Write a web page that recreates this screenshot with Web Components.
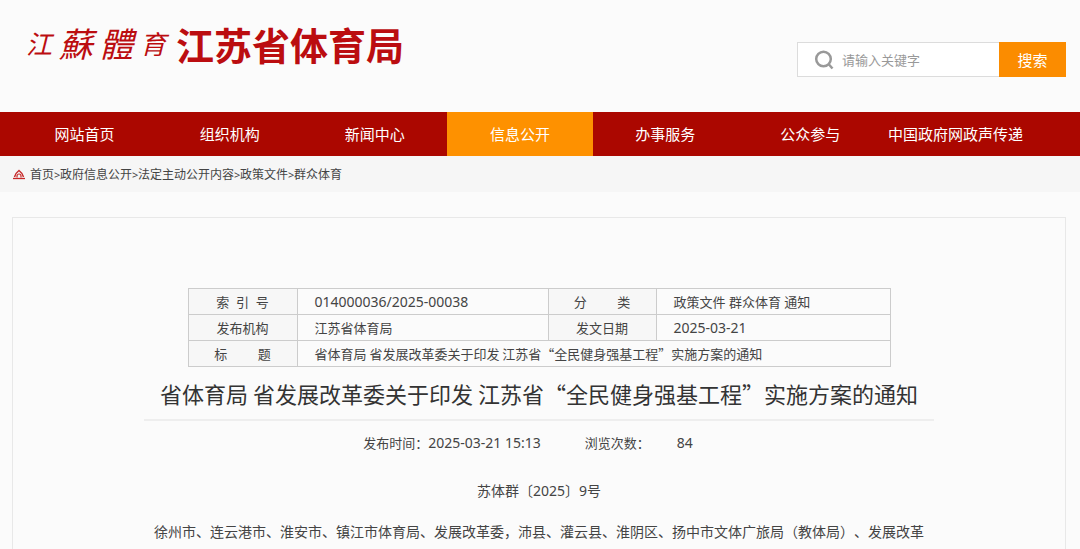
<!DOCTYPE html>
<html lang="zh-CN">
<head>
<meta charset="utf-8">
<meta name="viewport" content="width=device-width, initial-scale=1">
<title>江苏省体育局</title>
<style>
body{margin:0;background:#fbfbfb;color:#444;font-family:"Noto Sans","Noto Sans CJK SC",sans-serif;font-size:13px}
</style>
</head>
<body>
<sports-page></sports-page>
<script>
function define(name, html){
  const t=document.createElement('template');
  t.innerHTML='<style>*{box-sizing:border-box}a{color:inherit;text-decoration:none}</style>'+html;
  customElements.define(name, class extends HTMLElement{
    constructor(){super();this.attachShadow({mode:'open'}).append(t.content.cloneNode(true));}
  });
}

define('site-logo', `
<style>
:host{display:block;color:#bb0d10}
a{display:flex;align-items:center}
.script{display:flex;align-items:center;justify-content:space-between;width:140px;margin-right:10px;font-style:italic;font-size:34px;line-height:40px}
.small{font-size:26px}
h1{margin:0;font-size:38px;line-height:44px;font-weight:700;font-family:"Noto Sans CJK SC",sans-serif;white-space:nowrap}
</style>
<a href="#"><span class="script"><span class="small">江</span><span>蘇</span><span>體</span><span class="small">育</span></span><h1>江苏省体育局</h1></a>`);

define('search-box', `
<style>
:host{display:block}
form{display:flex;height:35px}
label{display:flex;align-items:center;gap:8px;width:202px;padding-left:16px;background:#fff;border:1px solid #dcdcdc;border-right:0}
svg{flex:none}
input{flex:1;min-width:0;border:0;outline:0;padding:0;background:none;font:inherit;font-size:13px;color:#444}
input::placeholder{color:#999;opacity:1}
button{width:67px;border:0;padding:0;background:#fb8c00;color:#fff;font:inherit;font-size:15px}
</style>
<form><label><svg width="20" height="20" viewBox="0 0 20 20" fill="none" stroke="#999" stroke-width="2.5" aria-hidden="true"><circle cx="9.5" cy="9" r="7.300"/><path d="M14.500 14l4 4.500"/></svg><input type="text" placeholder="请输入关键字" aria-label="请输入关键字"></label><button type="button">搜索</button></form>`);

define('site-header', `
<style>
:host{display:flex;justify-content:space-between;padding:22px 14px 0 26px;height:112px}
search-box{margin-top:20px}
</style>
<site-logo></site-logo><search-box></search-box>`);

define('nav-item', `
<style>
:host{display:block;flex:1 1 0;min-width:0}
:host([active]){background:#fe9100}
a{display:block;text-align:center;color:#fff;font-size:15px;line-height:44px;white-space:nowrap}
</style>
<a href="#"><slot></slot></a>`);

define('site-nav', `
<style>
:host{display:block;background:#ab0700}
nav{display:flex;padding:0 52px 0 12px}
</style>
<nav><nav-item>网站首页</nav-item><nav-item>组织机构</nav-item><nav-item>新闻中心</nav-item><nav-item active>信息公开</nav-item><nav-item>办事服务</nav-item><nav-item>公众参与</nav-item><nav-item>中国政府网政声传递</nav-item></nav>`);

define('bread-crumb', `
<style>
:host{display:block;background:#f6f6f6}
nav{display:flex;align-items:center;height:36px;padding:0 12px;font-size:12px;white-space:nowrap}
nav span{width:6px;text-align:center;font-size:11px}
svg{margin-right:4px}
</style>
<nav><svg width="14" height="12" viewBox="0 0 14 12" fill="none" stroke="#c62828" aria-hidden="true"><path d="M1 10.5h12" stroke-width="1.3"/><path d="M2.500 9Q3.500 5 7 2.500Q10.500 5 11.500 9" stroke-width="1.500"/><path d="M5 9.500V8a2 2 0 0 1 4 0v1.500" stroke-width="1.200"/></svg><a href="#">首页</a><span>&gt;</span><a href="#">政府信息公开</a><span>&gt;</span><a href="#">法定主动公开内容</a><span>&gt;</span><a href="#">政策文件</a><span>&gt;</span><a href="#">群众体育</a></nav>`);

define('doc-info', `
<style>
:host{display:block;max-width:703px;margin:0 auto}
table{width:100%;border-collapse:collapse;table-layout:fixed;line-height:20px}
th,td{height:26px;padding:3px 0 2px;border:1px solid #ccc;font-weight:400}
th{background:#f7f7f7;text-align:center;white-space:pre}
td{padding-left:17px;text-align:left}
.num{font-size:14px}
</style>
<table>
<colgroup><col style="width:109px"><col style="width:251px"><col style="width:108px"><col></colgroup>
<tr><th scope="row">索  引  号</th><td class="num">014000036/2025-00038</td><th scope="row">分         类</th><td>政策文件 群众体育 通知</td></tr>
<tr><th scope="row">发布机构</th><td>江苏省体育局</td><th scope="row">发文日期</th><td class="num">2025-03-21</td></tr>
<tr><th scope="row">标         题</th><td colspan="3"><slot></slot></td></tr>
</table>`);

define('doc-article', `
<style>
:host{display:block;max-width:790px;margin:0 auto;text-align:center}
h2{margin:0;padding:8px 0;border-bottom:2px solid #eee;font-size:22px;line-height:36px;font-weight:400;color:#333;white-space:nowrap;font-family:"Noto Sans CJK SC",sans-serif}
.meta{display:flex;justify-content:center;gap:44px;line-height:20px;margin-top:12px;padding-right:22px}
.meta span{display:flex}
.num{font-size:14px}
.meta .views{gap:27px}
p{margin:0;font-size:14px;line-height:40px}
.no{margin-top:18px}
.to{white-space:nowrap;font-family:"Noto Sans CJK SC",sans-serif;text-spacing-trim:space-all}
</style>
<h2><slot></slot></h2>
<div class="meta"><span>发布时间：<span class="num">2025-03-21 15:13</span></span><span class="views"><span>浏览次数：</span><span class="num">84</span></span></div>
<p class="no">苏体群〔2025〕9号</p>
<p class="to">徐州市、连云港市、淮安市、镇江市体育局、发展改革委，沛县、灌云县、淮阴区、扬中市文体广旅局（教体局）、发展改革</p>`);

define('sports-page', `
<style>
:host{display:block}
main{margin:25px 14px 0 12px;padding:70px 0 0;border:1px solid #e8e8e8;border-bottom:0}
.q{font-family:"Noto Sans CJK SC",sans-serif}
</style>
<site-header></site-header>
<site-nav></site-nav>
<bread-crumb></bread-crumb>
<main>
<doc-info><span class="q">省体育局 省发展改革委关于印发 江苏省“全民健身强基工程”实施方案的通知</span></doc-info>
<doc-article>省体育局 省发展改革委关于印发 江苏省“全民健身强基工程”实施方案的通知</doc-article>
</main>`);
</script>
</body>
</html>
